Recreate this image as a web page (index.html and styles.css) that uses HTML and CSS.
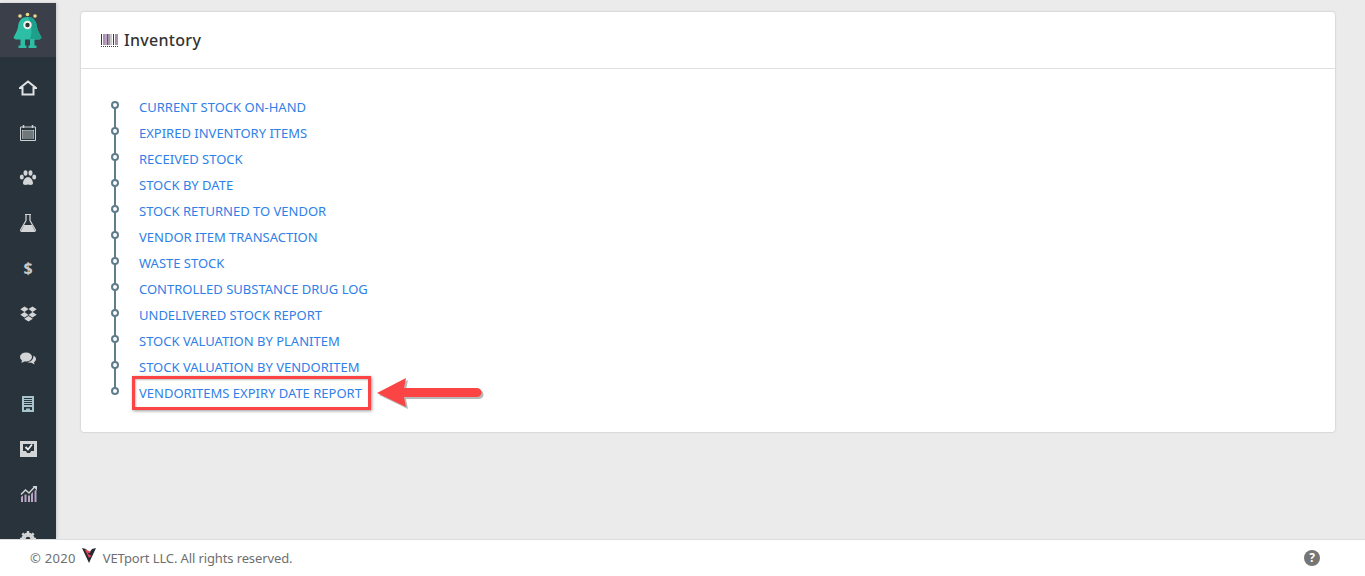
FILE: index.html
```html
<!DOCTYPE html>
<html lang="en">
<head>
    <meta charset="UTF-8">
    <meta name="viewport" content="width=device-width, initial-scale=1.0">
    <title>Inventory Reports</title>
    <link rel="stylesheet" href="styles.css">
</head>
<body>
    <div class="app">
        <nav class="sidebar">
            <div class="logo">
                <svg width="30" height="36" viewBox="0 0 30 36">
                    <circle cx="7" cy="4" r="1.8" fill="#e8d98c"/>
                    <circle cx="14.500" cy="2.500" r="1.8" fill="#e8d98c"/>
                    <circle cx="22" cy="4" r="1.8" fill="#e8d98c"/>
                    <path d="M14.500 5C7.500 5 5.500 10 5 15C4.500 19 2 22 .5 25.500C1 27 2.500 27.500 4 27.500H25C26.500 27.500 28 27 28.500 25.500C27 22 24.500 19 24 15C23.500 10 21.500 5 14.500 5Z" fill="#2cbfa5"/>
                    <path d="M15 5C21.500 5 23.500 10 24 15C24.500 19 27 22 28.500 25.500C28 27 26.500 27.500 25 27.500H17C20 20 18 10 15 5Z" fill="#1d9f8b"/>
                    <path d="M7.500 27H12V33.500H13.500V36H5.500V33.500H7.500ZM17 27H21.500V33.500H23.500V36H15.500V33.500H17Z" fill="#2cbfa5"/>
                    <circle cx="14.500" cy="13" r="4.200" fill="#f1f1ee"/>
                    <circle cx="14.500" cy="13" r="2.200" fill="#333"/>
                </svg>
            </div>
            <ul class="nav-list">
                <li><svg width="18" height="16" viewBox="0 0 18 16"><path d="M9 1.500L1 8H3.500V14.500H14.500V8H17Z" fill="none" stroke="#dfe3e6" stroke-width="2" stroke-linejoin="miter"/></svg></li>
                <li><svg width="16" height="16" viewBox="0 0 16 16"><path d="M.5 2H15.500V15.500H.5Z" fill="none" stroke="#cfd3d6"/><path d="M2 5H14V14H2Z" fill="#cfd3d6"/><path d="M4 5V14M6 5V14M8 5V14M10 5V14M12 5V14M2 7H14M2 9H14M2 11H14M2 13H14" stroke="#29333b" stroke-width=".7"/><path d="M3.500 0V3M12.500 0V3" stroke="#cfd3d6" stroke-width="1.500"/></svg></li>
                <li><svg width="18" height="16" viewBox="0 0 18 16" fill="#d3d5d6"><ellipse cx="2.800" cy="7" rx="2" ry="2.500"/><ellipse cx="6.500" cy="3" rx="2" ry="2.800"/><ellipse cx="11.500" cy="3" rx="2" ry="2.800"/><ellipse cx="15.200" cy="7" rx="2" ry="2.500"/><path d="M9 7C6.500 7 4 10.500 4 13C4 15.500 7 15 9 14.500C11 15 14 15.500 14 13C14 10.500 11.500 7 9 7Z"/></svg></li>
                <li><svg width="16" height="18" viewBox="0 0 16 18"><path d="M5 .5H11M6 1V6.500L.8 15.500C.3 16.500 1 17.500 2 17.500H14C15 17.500 15.700 16.500 15.200 15.500L10 6.500V1" fill="none" stroke="#d3d5d6" stroke-width="1.200"/><path d="M4 11H12L15 17H1Z" fill="#d3d5d6"/></svg></li>
                <li class="nav-glyph">$</li>
                <li><svg width="17" height="16" viewBox="0 0 17 16" fill="#d3d5d6"><path d="M4.500 .5L8.500 3L4.500 6L.3 3.300ZM12.500 .5L16.700 3.300L12.500 6L8.500 3ZM4.500 6L8.500 9L4.500 11.500L.3 8.700ZM12.500 6L16.700 8.700L12.500 11.500L8.500 9ZM4.500 12.500L8.500 10L12.500 12.500V13L8.500 15.500L4.500 13Z"/></svg></li>
                <li><svg width="16" height="14" viewBox="0 0 16 14" fill="#d3d5d6"><ellipse cx="6" cy="5" rx="6" ry="4.500"/><path d="M2 8L1.500 11L5 9Z"/><path d="M13.500 3.500C15 4.300 16 5.500 16 7C16 8.300 15.300 9.400 14 10.200L14.500 12.500L11.500 10.800C9.800 11 8.300 10.500 7 10C10.500 10 13.500 8 13.500 3.500Z"/></svg></li>
                <li><svg width="12" height="16" viewBox="0 0 12 16"><path d="M0 0H12V16H0Z" fill="#a9c3cc"/><path d="M2 2.500H10M2 4.500H10M2 6.500H10M2 8.500H10" stroke="#29333b"/><path d="M2 11H10V14H8V12.500H4V14H2Z" fill="#29333b"/></svg></li>
                <li><svg width="17" height="16" viewBox="0 0 17 16"><path d="M0 0H17V16H0Z" fill="#d3d5d6"/><path d="M3 3H14V10H11L10 12H7L6 10H3Z" fill="#29333b"/><path d="M5.500 6L8 8.500L12 3.500" fill="none" stroke="#eee" stroke-width="1.800"/></svg></li>
                <li><svg width="17" height="16" viewBox="0 0 17 16" fill="#cfd3d6"><path d="M1 8.500L5.500 4L9 7L14.500 1" fill="none" stroke="#d3d5d6" stroke-width="1.500"/><path d="M12.500 0H17V4.500Z"/><path d="M1 11L3 9.500V16H1ZM4.500 8.500H6.500V16H4.500ZM8 9.500H10V16H8ZM11 8L13 6V16H11ZM14.500 5L16.500 3V16H14.500Z" fill="#b9a6c4"/></svg></li>
                <li><svg width="16" height="16" viewBox="0 0 16 16"><circle cx="8" cy="8" r="5" fill="none" stroke="#d3d5d6" stroke-width="3"/><path d="M8 0V16M0 8H16M2.300 2.300L13.700 13.700M13.700 2.300L2.300 13.700" stroke="#d3d5d6" stroke-width="2.400"/><circle cx="8" cy="8" r="2.300" fill="#29333b"/></svg></li>
            </ul>
        </nav>
        <main class="content">
            <section class="card">
                <header class="card-header">
                    <svg class="barcode" width="17" height="13" viewBox="0 0 17 13">
                        <path d="M.5 0V11M3 0V11M8 0V11M12.500 0V11M16 0V11" stroke="#4a2a5c"/>
                        <path d="M5 0V11M6.500 0V11" stroke="#8b3f8f"/>
                        <path d="M10 0V11M14.500 0V11" stroke="#8f9a8c"/>
                        <path d="M0 12.500H17" stroke="#4a2a5c" stroke-dasharray="1 1"/>
                    </svg>
                    <h2>Inventory</h2>
                </header>
                <ul class="report-list">
                    <li><a href="#">CURRENT STOCK ON-HAND</a></li>
                    <li><a href="#">EXPIRED INVENTORY ITEMS</a></li>
                    <li><a href="#">RECEIVED STOCK</a></li>
                    <li><a href="#">STOCK BY DATE</a></li>
                    <li><a href="#">STOCK RETURNED TO VENDOR</a></li>
                    <li><a href="#">VENDOR ITEM TRANSACTION</a></li>
                    <li><a href="#">WASTE STOCK</a></li>
                    <li><a href="#">CONTROLLED SUBSTANCE DRUG LOG</a></li>
                    <li><a href="#">UNDELIVERED STOCK REPORT</a></li>
                    <li><a href="#">STOCK VALUATION BY PLANITEM</a></li>
                    <li><a href="#">STOCK VALUATION BY VENDORITEM</a></li>
                    <li class="marked">
                        <a href="#">VENDORITEMS EXPIRY DATE REPORT</a>
                        <svg class="arrow" width="110" height="34" viewBox="0 0 110 34">
                            <path d="M0 15L29 0L27 10H100C106 10 106 19 100 19H27L29 29Z" fill="#000" opacity=".28" transform="translate(2 2)"/>
                            <path d="M0 15L29 0L27 10H100C106 10 106 19 100 19H27L29 29Z" fill="#fb4444"/>
                        </svg>
                    </li>
                </ul>
            </section>
        </main>
    </div>
    <footer class="footer">
        <div class="copyright">
            <span class="year">© 2020</span>
            <svg class="vet-logo" width="14" height="15" viewBox="0 0 14 15">
                <path d="M0 0L4 1L7 5L10 1L14 0L7 15Z" fill="#222b33"/>
                <path d="M2.500 1L9 4L5.500 5.500L9.500 8L7 10L4 4Z" fill="#e8404f"/>
            </svg>
            <span class="rights">VETport LLC. All rights reserved.</span>
        </div>
        <div class="help">?</div>
    </footer>
</body>
</html>
```

FILE: styles.css
```css
*, *::before, *::after {
    box-sizing: border-box;
}
html, body {
    height: 100%;
}
body {
    margin: 0;
    display: flex;
    flex-direction: column;
    overflow: hidden;
    font-family: "Noto Sans", Arial, sans-serif;
    background-color: #ebebeb;
}
.app {
    flex: 1;
    display: flex;
    min-height: 0;
    padding-top: 3px;
}
.sidebar {
    width: 56px;
    flex-shrink: 0;
    overflow: hidden;
    background-color: #29333b;
    box-shadow: 1px 0 3px rgba(0,0,0,0.15);
}
.logo {
    height: 54px;
    display: flex;
    justify-content: center;
    padding-top: 9px;
    background-color: #3b3f4a;
}
.nav-list {
    list-style: none;
    margin: 0;
    padding: 8px 0 0;
}
.nav-list li {
    height: 45.2px;
    display: flex;
    align-items: center;
    justify-content: center;
}
.nav-glyph {
    color: #c5cbd0;
    font-size: 16px;
    font-weight: 700;
}
.content {
    flex: 1;
    padding: 9px 30px 0 25px;
}
.card {
    height: 420px;
    background-color: #fff;
    border-radius: 3px;
    box-shadow: 0 0 2px rgba(0,0,0,0.25);
}
.card-header {
    height: 57px;
    display: flex;
    align-items: center;
    gap: 6px;
    padding-left: 20px;
    border-bottom: 1px solid #e0e0e0;
}
.card-header h2 {
    margin: 0;
    font-size: 16px;
    font-weight: 500;
    letter-spacing: 0.3px;
    color: #333;
}
.report-list {
    position: relative;
    list-style: none;
    margin: 0;
    padding: 25px 0 0 58px;
}
.report-list::before {
    content: "";
    position: absolute;
    left: 33px;
    top: 36px;
    height: 286px;
    width: 2px;
    background-color: #607d8b;
}
.report-list li {
    position: relative;
    height: 26px;
    line-height: 26px;
    font-size: 13px;
}
.report-list li::before {
    content: "";
    position: absolute;
    left: -28px;
    top: 7px;
    width: 8px;
    height: 8px;
    border: 2px solid #607d8b;
    border-radius: 50%;
    background-color: #fff;
}
.report-list a {
    color: #2f80e7;
    text-decoration: none;
}
.report-list a:hover {
    text-decoration: underline;
}
.marked::after {
    content: "";
    position: absolute;
    left: -7px;
    top: -4px;
    width: 239px;
    height: 34px;
    border: 3px solid #fb4444;
    box-shadow: 1px 1px 3px rgba(0,0,0,0.4), inset 1px 1px 2px rgba(0,0,0,0.25);
    pointer-events: none;
}
.arrow {
    position: absolute;
    left: 238px;
    top: -2px;
}
.footer {
    height: 37px;
    flex-shrink: 0;
    display: flex;
    align-items: center;
    justify-content: space-between;
    padding: 0 45px 0 30px;
    background-color: #fff;
    border-top: 1px solid #ddd;
    position: relative;
    font-size: 13px;
    color: #6f6f6f;
}
.copyright {
    display: flex;
    align-items: center;
    gap: 6px;
}
.year {
    letter-spacing: 0.3px;
}
.rights {
    letter-spacing: -0.12px;
}
.vet-logo {
    margin: -6px 1px 0 0;
}
.help {
    width: 16px;
    height: 16px;
    border-radius: 50%;
    background-color: #757575;
    color: #fff;
    font-size: 12px;
    font-weight: 700;
    line-height: 16px;
    text-align: center;
}
```
